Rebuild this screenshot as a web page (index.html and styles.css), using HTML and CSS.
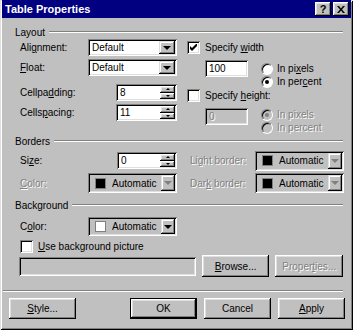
FILE: index.html
```html
<!DOCTYPE html>
<html lang="en">
<head>
    <meta charset="UTF-8">
    <title>Table Properties</title>
    <link rel="stylesheet" href="styles.css">
</head>
<body>
    <div class="dialog">
        <div class="titlebar">
            <span class="title">Table Properties</span>
            <div class="title-buttons">
                <span class="tbtn help">?</span>
                <span class="tbtn">
                    <svg width="8" height="7" viewBox="0 0 8 7"><path d="M0 0h2l2 2.5L6 0h2L5 3.5 8 7H6L4 4.5 2 7H0l3-3.5z" fill="#000"/></svg>
                </span>
            </div>
        </div>
        <div class="body">
            <div class="group-head"><span>Layout</span><i class="etch"></i></div>
            <div class="layout">
                <div class="col-left">
                    <div class="lrow r1">
                        <label>Ali<u>g</u>nment:</label>
                        <div class="select"><span>Default</span><b class="drop"><i class="tri"></i></b></div>
                    </div>
                    <div class="lrow r2">
                        <label><u>F</u>loat:</label>
                        <div class="select"><span>Default</span><b class="drop"><i class="tri"></i></b></div>
                    </div>
                    <div class="lrow r3">
                        <label>Cellpa<u>d</u>ding:</label>
                        <div class="spin"><span>8</span><b class="spin-btns"><i class="up"></i><i class="down"></i></b></div>
                    </div>
                    <div class="lrow r4">
                        <label>Cells<u>p</u>acing:</label>
                        <div class="spin"><span>11</span><b class="spin-btns"><i class="up"></i><i class="down"></i></b></div>
                    </div>
                </div>
                <div class="col-right">
                    <div class="check-row first">
                        <span class="checkbox checked">
                            <svg width="7" height="7" viewBox="0 0 7 7"><path d="M0 2v3l2 2 5-5V-1L2 4z" fill="#000"/></svg>
                        </span>
                        <span>Specify <u>w</u>idth</span>
                    </div>
                    <div class="size-row">
                        <div class="field">100</div>
                        <div class="radios">
                            <div class="radio-row"><span class="radio"></span><span>In pi<u>x</u>els</span></div>
                            <div class="radio-row"><span class="radio on"></span><span>In per<u>c</u>ent</span></div>
                        </div>
                    </div>
                    <div class="check-row second">
                        <span class="checkbox"></span>
                        <span>Specify <u>h</u>eight:</span>
                    </div>
                    <div class="size-row last">
                        <div class="field off">0</div>
                        <div class="radios off">
                            <div class="radio-row"><span class="radio on"></span><span>In pixels</span></div>
                            <div class="radio-row"><span class="radio"></span><span>In percent</span></div>
                        </div>
                    </div>
                </div>
            </div>

            <div class="group-head borders-head"><span>Borders</span><i class="etch"></i></div>
            <div class="borders">
                <label>Si<u>z</u>e:</label>
                <div class="spin small"><span>0</span><b class="spin-btns"><i class="up"></i><i class="down"></i></b></div>
                <label class="off side">Li<u>g</u>ht border:</label>
                <div class="picker"><i class="swatch"></i><span>Automatic</span><b class="drop"><i class="tri"></i></b></div>

                <label class="off"><u>C</u>olor:</label>
                <div class="picker"><i class="swatch"></i><span>Automatic</span><b class="drop"><i class="tri"></i></b></div>
                <label class="off side">Dar<u>k</u> border:</label>
                <div class="picker"><i class="swatch"></i><span>Automatic</span><b class="drop"><i class="tri"></i></b></div>
            </div>

            <div class="group-head bg-head"><span>Background</span><i class="etch"></i></div>
            <div class="background">
                <div class="lrow">
                    <label>C<u>o</u>lor:</label>
                    <div class="picker live"><i class="swatch white"></i><span>Automatic</span><b class="drop"><i class="tri"></i></b></div>
                </div>
                <div class="check-row pic">
                    <span class="checkbox"></span>
                    <span><u>U</u>se background picture</span>
                </div>
                <div class="file-row">
                    <div class="field wide"></div>
                    <span class="btn browse"><u>B</u>rowse...</span>
                    <span class="btn browse off">Proper<u>t</u>ies...</span>
                </div>
            </div>

            <i class="etch full"></i>

            <div class="actions">
                <span class="btn"><u>S</u>tyle...</span>
                <span class="spacer"></span>
                <span class="btn default">OK</span>
                <span class="btn">Cancel</span>
                <span class="btn"><u>A</u>pply</span>
            </div>
        </div>
    </div>
</body>
</html>
```

FILE: styles.css
```css
body {
    margin: 0;
    font-family: "Liberation Sans", Arial, sans-serif;
    font-size: 10px;
    color: #000;
}
u {
    text-decoration: underline;
    text-underline-offset: 1px;
}

.dialog {
    width: 353px;
    height: 330px;
    box-sizing: border-box;
    background: #c0c0c0;
    padding: 0 2px 2px 2px;
    box-shadow: inset 1px 1px #dfdfdf, inset -1px -1px #000, inset 2px 2px #fff, inset -2px -2px #808080;
}

.titlebar {
    height: 18px;
    background: #000080;
    display: flex;
    align-items: center;
    justify-content: space-between;
    padding: 0 2px 0 3px;
}
.title {
    color: #fff;
    font-weight: bold;
    font-size: 11px;
}
.title-buttons {
    display: flex;
    gap: 2px;
}
.tbtn {
    width: 16px;
    height: 14px;
    display: flex;
    align-items: center;
    justify-content: center;
    background: #c0c0c0;
    box-shadow: inset -1px -1px #000, inset 1px 1px #fff, inset -2px -2px #808080, inset 2px 2px #dfdfdf;
    font-weight: bold;
    font-size: 11px;
}

.body {
    padding: 8px 8px 0 7px;
}

/* group headers with etched line */
.group-head {
    display: flex;
    align-items: center;
    height: 12px;
    padding-left: 6px;
}
.etch {
    display: block;
    flex: 1;
    height: 0;
    border-top: 1px solid #808080;
    border-bottom: 1px solid #fff;
    margin-left: 4px;
}
.etch.full {
    margin: 13px 0 0 -6px;
}

label {
    display: block;
}
.off,
.off span {
    color: #808080;
    text-shadow: 1px 1px #fff;
}

/* sunken fields */
.select,
.spin,
.field,
.picker {
    box-sizing: border-box;
    display: flex;
    align-items: center;
    padding: 2px;
    background: #fff;
    box-shadow: inset 1px 1px #808080, inset -1px -1px #fff, inset 2px 2px #000, inset -2px -2px #dfdfdf;
}
.select span,
.spin span {
    flex: 1;
    padding-left: 2px;
}
.spin-btns i,
.btn {
    background: #c0c0c0;
    box-shadow: inset -1px -1px #000, inset 1px 1px #fff, inset -2px -2px #808080, inset 2px 2px #dfdfdf;
}
.drop {
    width: 16px;
    flex: none;
    align-self: stretch;
    display: flex;
    align-items: center;
    justify-content: center;
    background: #c0c0c0;
    box-shadow: inset -1px -1px #000, inset 1px 1px #dfdfdf, inset -2px -2px #808080, inset 2px 2px #fff;
}
.tri {
    width: 0;
    height: 0;
    border-left: 4px solid transparent;
    border-right: 4px solid transparent;
    border-top: 4px solid #000;
}
.picker .tri {
    border-top-color: #808080;
}
.picker.live .tri {
    border-top-color: #000;
}

/* layout group */
.layout {
    display: flex;
    align-items: flex-start;
    padding-left: 11px;
}
.col-left {
    width: 157px;
}
.lrow {
    display: flex;
    align-items: center;
    height: 17px;
}
.lrow label {
    width: 68px;
}
.r1 { margin-top: 1px; }
.r2 { margin-top: 3px; }
.r3 { margin-top: 8px; }
.r4 { margin-top: 3px; }
.select {
    width: 89px;
    height: 17px;
}
.spin {
    width: 61px;
    height: 17px;
    margin-left: auto;
}
.spin-btns {
    width: 15px;
    align-self: stretch;
    display: flex;
    flex-direction: column;
}
.spin-btns i {
    flex: 1;
    display: block;
    position: relative;
}
.spin-btns i::after {
    content: "";
    position: absolute;
    left: 6px;
    top: 2px;
    border-left: 2px solid transparent;
    border-right: 2px solid transparent;
}
.spin-btns .up::after {
    border-bottom: 2px solid #000;
}
.spin-btns .down::after {
    border-top: 2px solid #000;
}

.col-right {
    margin-left: 10px;
    flex: 1;
}
.check-row {
    display: flex;
    align-items: center;
    gap: 5px;
    height: 13px;
}
.check-row.first { margin-top: 3px; }
.check-row.second { margin-top: 1px; }
.checkbox {
    width: 13px;
    height: 13px;
    box-sizing: border-box;
    display: flex;
    align-items: center;
    justify-content: center;
    background: #fff;
    box-shadow: inset 1px 1px #808080, inset -1px -1px #fff, inset 2px 2px #000, inset -2px -2px #dfdfdf;
}
.size-row {
    display: flex;
    align-items: flex-start;
    margin-top: 6px;
}
.field {
    width: 43px;
    height: 17px;
    margin-left: 18px;
    padding-left: 4px;
}
.field.off {
    background: #c0c0c0;
}
.radios {
    margin-left: 13px;
    margin-top: 2px;
}
.size-row.last .radios {
    margin-top: 0;
}
.radio-row {
    display: flex;
    align-items: center;
    gap: 4px;
    height: 13px;
}
.radio {
    width: 12px;
    height: 12px;
    box-sizing: border-box;
    border-radius: 50%;
    background: #fff;
    border: 1px solid;
    border-color: #808080 #fff #fff #808080;
    box-shadow: inset 1px 1px #000;
    position: relative;
}
.radio.on::after {
    content: "";
    position: absolute;
    left: 3px;
    top: 3px;
    width: 4px;
    height: 4px;
    border-radius: 50%;
    background: #000;
}
.radios.off .radio {
    background: #c0c0c0;
}
.radios.off .radio.on::after {
    background: #808080;
}

/* borders group */
.borders-head { margin-top: 1px; }
.borders {
    display: grid;
    grid-template-columns: 68px 89px 78px 89px;
    grid-template-rows: 21px 20px;
    row-gap: 2px;
    align-items: center;
    padding-left: 11px;
    margin-top: 3px;
}
.borders .side {
    padding-left: 13px;
}
.spin.small {
    width: 60px;
    justify-self: end;
}
.picker {
    width: 89px;
    height: 20px;
    background: #c0c0c0;
    padding: 2px 2px 2px 7px;
}
.picker .drop {
    width: 14px;
}
.picker span {
    flex: 1;
    margin-left: 6px;
    white-space: nowrap;
    overflow: hidden;
    color: #000;
    text-shadow: none;
}
.swatch {
    width: 11px;
    height: 11px;
    flex: none;
    box-sizing: border-box;
    background: #000;
    border: 1px solid #808080;
}
.swatch.white {
    background: #fff;
}

/* background group */
.bg-head { margin-top: 6px; }
.background {
    padding-left: 11px;
}
.background .lrow {
    margin-top: 6px;
    height: 19px;
}
.background .picker {
    height: 19px;
}
.check-row.pic {
    margin-top: 4px;
}
.file-row {
    display: flex;
    align-items: center;
    height: 22px;
    margin-top: 2px;
}
.field.wide {
    width: 178px;
    height: 19px;
    margin-left: -1px;
    background: #c0c0c0;
}

.btn {
    box-sizing: border-box;
    display: flex;
    align-items: center;
    justify-content: center;
    width: 67px;
    height: 21px;
}
.btn.browse {
    width: 68px;
    height: 22px;
    margin-left: 6px;
}
.btn.default {
    border: 1px solid #000;
}

.actions {
    display: flex;
    gap: 7px;
    margin: 6px -2px 0 0;
}
.spacer {
    flex: 1;
}
```
